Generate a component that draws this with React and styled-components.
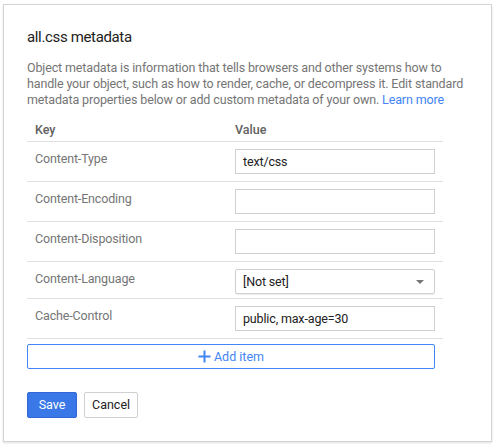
import React from "react";
import styled, { createGlobalStyle } from "styled-components";

const rows = [
    { key: "Content-Type", value: "text/css" },
    { key: "Content-Encoding", value: "" },
    { key: "Content-Disposition", value: "" },
    { key: "Content-Language", value: "[Not set]", select: true },
    { key: "Cache-Control", value: "public, max-age=30" },
];

export default function App() {
    return (
        <>
            <Global />
            <Page>
                <Dialog>
                    <Title>all.css metadata</Title>
                    <Description>
                        Object metadata is information that tells browsers and other systems how to<br />
                        handle your object, such as how to render, cache, or decompress it. Edit standard<br />
                        metadata properties below or add custom metadata of your own. <Link>Learn more</Link>
                    </Description>
                    <Table>
                        <HeaderRow>
                            <HeaderCell>Key</HeaderCell>
                            <HeaderCell>Value</HeaderCell>
                        </HeaderRow>
                        {rows.map((row, index) => (
                            <Row key={index} $short={row.select}>
                                <KeyCell>{row.key}</KeyCell>
                                <ValueCell>
                                    {row.select ? (
                                        <Select>
                                            <span>{row.value}</span>
                                            <Caret />
                                        </Select>
                                    ) : (
                                        <Input>{row.value}</Input>
                                    )}
                                </ValueCell>
                            </Row>
                        ))}
                    </Table>
                    <AddButton>
                        <svg width="13" height="13" viewBox="0 0 13 13">
                            <path d="M6.5 0.5v12M0.5 6.5h12" stroke="#4285f4" strokeWidth="2" />
                        </svg>
                        Add item
                    </AddButton>
                    <Actions>
                        <PrimaryButton>Save</PrimaryButton>
                        <Button>Cancel</Button>
                    </Actions>
                </Dialog>
            </Page>
        </>
    )
}

const Global = createGlobalStyle`
    html, body {
        margin: 0;
        background: #ffffff;
        font-family: Roboto, "Liberation Sans", Arial, sans-serif;
    }
`
const Page = styled.div`
    padding: 4px 4px 5px 3px;
    width: 496px;
    height: 447px;
    box-sizing: border-box;
`
const Dialog = styled.div`
    box-sizing: border-box;
    width: 489px;
    height: 438px;
    border: 1px solid #d4d4d4;
    box-shadow: 0 1px 2px rgba(0, 0, 0, 0.12);
    background: #fff;
    padding: 22px 40px 0 23px;
`
const Title = styled.h1`
    margin: 0;
    font-size: 15px;
    letter-spacing: -0.35px;
    font-weight: 400;
    color: #212121;
    line-height: 20px;
`
const Description = styled.p`
    margin: 13px 0 0;
    white-space: nowrap;
    font-size: 12.5px;
    letter-spacing: -0.14px;
    line-height: 16px;
    color: #757575;
`
const Link = styled.span`
    color: #4285f4;
`
const Table = styled.div`
    margin-top: 14px;
    width: 416px;
`
const HeaderRow = styled.div`
    display: grid;
    grid-template-columns: 1fr 1fr;
    height: 19px;
    border-bottom: 1px solid #e0e0e0;
`
const HeaderCell = styled.div`
    padding-left: 8px;
    font-size: 12.5px;
    font-weight: 500;
    color: #616161;
    line-height: 16px;
    &:nth-child(2) {
        padding-left: 0;
    }
`
const Row = styled.div`
    display: grid;
    grid-template-columns: 1fr 1fr;
    height: ${p => (p.$short ? "36px" : "39px")};
    border-bottom: 1px solid #e0e0e0;
`
const KeyCell = styled.div`
    padding: 9px 0 0 8px;
    font-size: 12.5px;
    letter-spacing: -0.15px;
    line-height: 16px;
    color: #757575;
`
const ValueCell = styled.div`
    padding-top: 7px;
`
const Input = styled.div`
    box-sizing: border-box;
    width: 200px;
    height: 25px;
    border: 1px solid #d0d0d0;
    padding: 0 7px;
    font-size: 12.5px;
    letter-spacing: -0.15px;
    line-height: 23px;
    color: #212121;
`
const Select = styled(Input)`
    display: flex;
    justify-content: space-between;
    align-items: center;
    box-shadow: 0 1px 1px rgba(0, 0, 0, 0.08);
    border-radius: 2px;
`
const Caret = styled.span`
    width: 0;
    height: 0;
    margin-right: 3px;
    border-left: 4px solid transparent;
    border-right: 4px solid transparent;
    border-top: 4px solid #757575;
`
const AddButton = styled.div`
    box-sizing: border-box;
    margin-top: 5px;
    width: 408px;
    height: 25px;
    border: 1px solid #4285f4;
    border-radius: 2px;
    display: flex;
    align-items: center;
    justify-content: center;
    gap: 3px;
    font-size: 12.5px;
    color: #4285f4;
`
const Actions = styled.div`
    display: flex;
    gap: 7px;
    margin-top: 23px;
`
const Button = styled.div`
    box-sizing: border-box;
    height: 26px;
    padding: 0 7px;
    border: 1px solid #d0d0d0;
    border-radius: 2px;
    font-size: 12.5px;
    line-height: 24px;
    color: #212121;
    background: #fff;
`
const PrimaryButton = styled(Button)`
    width: 50px;
    text-align: center;
    padding: 0;
    background: #3b78e7;
    border-color: #3367d6;
    color: #fff;
`
